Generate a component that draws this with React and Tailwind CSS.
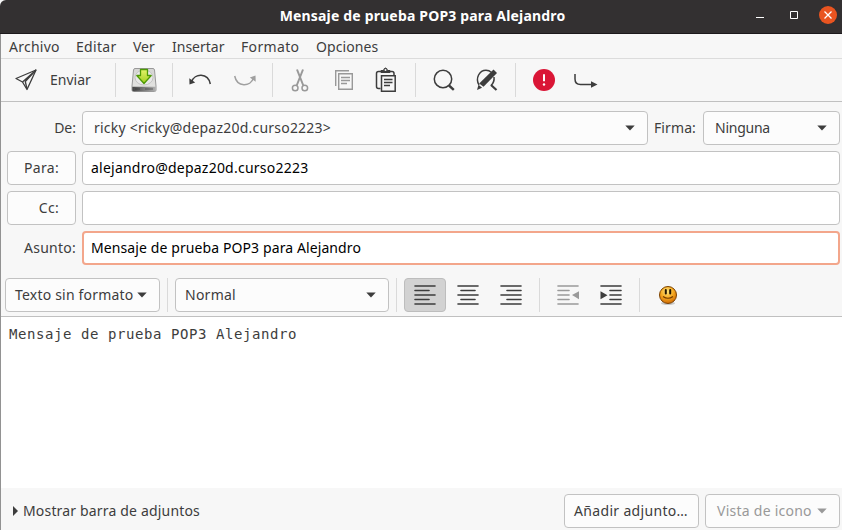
import React from 'react';

const Caret = ({ className = '' }) => (
  <svg className={`shrink-0 ${className}`} width="10" height="6" viewBox="0 0 10 6">
    <path d="M.3.5h9.4L5 5.6z" fill="currentColor" />
  </svg>
);

const Sep = ({ className = '' }) => <div className={`h-[34px] w-px shrink-0 bg-[#dadada] ${className}`} />;

const box = 'flex shrink-0 items-center rounded-[4px] border border-[#c2c2c2] bg-[#fcfcfc]';

const Lines = ({ rows, children, className = '' }) => (
  <svg className={className} width="22" height="20" viewBox="0 0 22 20">
    {rows.map(([a, b], i) => (
      <path key={i} d={`M${a} ${1 + i * 4.5}H${b}`} stroke="currentColor" strokeWidth="1.6" strokeLinecap="round" />
    ))}
    {children}
  </svg>
);

const Send = () => (
  <svg width="24" height="24" viewBox="0 0 24 24" fill="none" stroke="currentColor" strokeWidth="1.3" strokeLinejoin="round">
    <path d="M22 2 2 10.5l6.500 3.500L13 21.500z" />
    <path d="M22 2 8.500 14M22 2 11.300 13.500 13 21" />
  </svg>
);

const Drive = () => (
  <svg width="26" height="26" viewBox="0 0 26 26">
    <defs>
      <linearGradient id="top" x1="0" y1="0" x2="0" y2="1">
        <stop stopColor="#d5d5d3" />
        <stop offset="1" stopColor="#e6e6e4" />
      </linearGradient>
      <linearGradient id="front" x1="0" x2="1">
        <stop stopColor="#444" />
        <stop offset="1" stopColor="#b0b0b0" />
      </linearGradient>
      <linearGradient id="arrow" x1="0" y1="0" x2="0" y2="1">
        <stop stopColor="#e4f36a" />
        <stop offset="1" stopColor="#9fce1f" />
      </linearGradient>
    </defs>
    <path d="M4 1.500h18q1.200 0 1.500 1.500l1.500 16v4q0 1.500-1.500 1.500h-21Q1 24.500 1 23v-4L2.500 3q.3-1.500 1.500-1.500z" fill="url(#top)" stroke="#999" />
    <path d="M1.300 19.800h23.400V23q0 1.200-1.200 1.200h-21Q1.300 24.200 1.300 23z" fill="url(#front)" />
    <ellipse cx="13" cy="10.500" rx="9" ry="7.500" fill="#e9e9e8" stroke="#bbb" strokeWidth=".8" />
    <path d="M4 22h5M14 22h8" stroke="#292929" strokeWidth="1.200" opacity=".55" />
    <path d="M9.500 2.500h7v6h3.700L13 16.500 5.800 8.500h3.700z" fill="url(#arrow)" stroke="#4e9a06" strokeWidth="1.300" strokeLinejoin="round" />
  </svg>
);

const Undo = () => (
  <svg width="24" height="16" viewBox="0 0 24 16" fill="none">
    <path d="M3.500 10C6.500 1 20 .5 22.300 12" stroke="currentColor" strokeWidth="1.500" />
    <path d="m1.300 6.300.2 6.200 5.700-2z" fill="currentColor" />
  </svg>
);

const Cut = () => (
  <svg width="18" height="24" viewBox="0 0 18 24" fill="none" stroke="currentColor" strokeWidth="1.500">
    <circle cx="4.200" cy="20" r="2.800" />
    <circle cx="13.800" cy="20" r="2.800" />
    <path d="M6 1.500 12.300 17.500M12 1.500 5.700 17.500" strokeWidth="2" />
  </svg>
);

const Copy = () => (
  <svg width="20" height="22" viewBox="0 0 20 22" fill="none" stroke="currentColor" strokeWidth="1.400">
    <path d="M1.700 17V1.700H15M4.700 4.700h13.600v15.600H4.700zM7 8.500h9M7 11.500h9M7 14.500h6" />
  </svg>
);

const Paste = () => (
  <svg width="22" height="26" viewBox="0 0 22 26" fill="none" stroke="currentColor" strokeWidth="1.500">
    <path d="M5.500 21.500H3.500Q1.500 21.500 1.500 19.500V6.500Q1.500 4.500 3.500 4.500H17Q19 4.500 19 6.500V8" />
    <path d="M6.500 8.800h13.700v15.400H6.500zM9 12.500h8.500M9 15.500h8.500M9 18.500h6" />
    <path d="M6 5.500V3.500h2.500Q9 1 10.500 1T12.500 3.500H15v2z" fill="currentColor" strokeWidth="1" />
    <circle cx="10.500" cy="3" r="1" fill="#f7f7f7" stroke="none" />
  </svg>
);

const Search = () => (
  <svg width="24" height="24" viewBox="0 0 24 24" fill="none" stroke="currentColor">
    <circle cx="11" cy="11" r="8.700" strokeWidth="1.500" />
    <path d="m17 17.500 4.800 4.300" strokeWidth="2.400" />
  </svg>
);

const Replace = () => (
  <svg width="24" height="24" viewBox="0 0 24 24" fill="none" stroke="currentColor">
    <path d="M4 17C0 10 4.500 2.200 11 2.200c2 0 4 .8 5.200 2M19 9c.4 3-.3 6-3 8.500" strokeWidth="1.500" />
    <path d="m16 17 5.500 5" strokeWidth="2.200" />
    <path d="m18.500 1.500 3.500 3.400L8.500 18.800l-4.300-3.300z" fill="currentColor" stroke="none" />
    <path d="m3.500 16.800 3.600 2.900L2 22z" fill="currentColor" stroke="none" />
  </svg>
);

const Smiley = () => (
  <svg width="20" height="21" viewBox="0 0 20 21">
    <defs>
      <radialGradient id="face" cx=".45" cy=".3" r=".75">
        <stop stopColor="#ffe680" />
        <stop offset=".5" stopColor="#f5a820" />
        <stop offset="1" stopColor="#c96000" />
      </radialGradient>
    </defs>
    <ellipse cx="10" cy="18.300" rx="7" ry="1.800" fill="#c9c9c9" />
    <circle cx="10" cy="10" r="8.500" fill="url(#face)" stroke="#7c4200" />
    <path d="M7.800 5v3.500M12.200 5v3.500" stroke="#211400" strokeWidth="2" strokeLinecap="round" />
    <path d="M5 11.500q5 3.500 10 0" fill="none" stroke="#743b00" strokeWidth="1.200" />
  </svg>
);

export default function App() {
  return (
    <div className="flex h-[530px] w-[842px] flex-col overflow-hidden bg-[#f7f7f7] font-['Noto_Sans','Open_Sans',sans-serif] text-[14px] leading-5 whitespace-nowrap text-[#3d3d3d]">
      <header className="grid h-[34px] shrink-0 grid-cols-[1fr_auto_1fr] items-center rounded-tl-[6px] border-b border-[#1c191c] bg-[#333031] text-white">
        <span />
        <h1 className="pb-0.5 pl-[3px] text-[14px] font-bold tracking-[0.17px]">Mensaje de prueba POP3 para Alejandro</h1>
        <div className="flex items-center justify-end pr-[5px] pb-[3px]">
          <svg width="72" height="18" viewBox="0 0 72 18" fill="none" stroke="white">
            <path d="M9 11.500h8M43.500 5.500h7v7h-7z" />
          </svg>
          <svg width="18" height="18" viewBox="0 0 18 18">
            <circle cx="9" cy="9" r="9" fill="#e95420" />
            <path d="m5.500 5.500 7 7m0-7-7 7" stroke="white" strokeWidth="1.300" />
          </svg>
        </div>
      </header>

      <div className="flex min-h-0 flex-1 flex-col border-l border-[#929292]">
        <nav className="flex h-[25px] shrink-0 items-center border-b border-[#dcdcdc] pt-0.5 pl-2">
          <span className="w-[67px] tracking-[0.25px]">Archivo</span>
          <span className="w-[57px] tracking-[0.3px]">Editar</span>
          <span className="w-[39px]">Ver</span>
          <span className="w-[69px]">Insertar</span>
          <span className="w-[75px] tracking-[0.35px]">Formato</span>
          <span className="tracking-[0.1px]">Opciones</span>
        </nav>

        <div className="flex h-[43px] shrink-0 items-center border-b border-[#c0c0c0]">
          <div className="flex w-[114px] items-center gap-3 pl-[13px]">
            <Send />
            <span>Enviar</span>
          </div>
          <Sep />
          <div className="flex w-14 justify-center"><Drive /></div>
          <Sep />
          <div className="flex w-[99px] items-center gap-[21px] pl-[15px]">
            <Undo />
            <span className="rotate-180 text-[#a0a0a0]"><Undo /></span>
          </div>
          <Sep />
          <div className="flex w-[142px] items-center pl-[18px]">
            <span className="w-[43px] text-[#999]"><Cut /></span>
            <span className="w-[41px] text-[#999]"><Copy /></span>
            <Paste />
          </div>
          <Sep />
          <div className="flex w-[99px] items-center gap-[19px] pl-4">
            <Search />
            <Replace />
          </div>
          <Sep />
          <div className="flex items-center gap-[19px] pl-[17px]">
            <svg width="22" height="22" viewBox="0 0 22 22">
              <circle cx="11" cy="11" r="11" fill="#da1636" />
              <path d="M11 5.200v7" stroke="white" strokeWidth="2" />
              <circle cx="11" cy="15.500" r="1.200" fill="white" />
            </svg>
            <svg className="mt-0.5" width="24" height="16" viewBox="0 0 24 16">
              <path d="M1 1v5q0 5.500 5.500 5.500H18" fill="none" stroke="currentColor" strokeWidth="1.500" />
              <path d="M17 8.300 23.500 11.500 17 14.700z" fill="currentColor" />
            </svg>
          </div>
        </div>

        <section className="grid h-[163px] shrink-0 grid-cols-[69px_758px] content-start items-center gap-x-1.5 gap-y-1.5 pt-[9px] pl-1.5">
          <span className="text-right">De:</span>
          <div className="flex items-center">
            <div className={`${box} h-[34px] w-[566px] justify-between pr-3 pl-[11px]`}>
              <span className="tracking-[0.22px]">ricky &lt;ricky@depaz20d.curso2223&gt;</span>
              <Caret />
            </div>
            <span className="w-[55px] pl-1.5 tracking-[0.1px]">Firma:</span>
            <div className={`${box} h-[34px] w-[137px] justify-between pr-3 pl-[11px]`}>
              <span className="tracking-[-0.25px]">Ninguna</span>
              <Caret />
            </div>
          </div>
          <div className={`${box} h-[34px] justify-end pr-4 tracking-[0.3px]`}>Para:</div>
          <div className="flex h-[34px] items-center rounded-[4px] border border-[#c2c2c2] bg-white pl-2 tracking-[0.23px] text-black">alejandro@depaz20d.curso2223</div>
          <div className={`${box} h-[34px] justify-end pr-4 tracking-[0.3px]`}>Cc:</div>
          <div className="h-[34px] rounded-[4px] border border-[#c2c2c2] bg-white" />
          <span className="text-right tracking-[0.25px]">Asunto:</span>
          <div className="flex h-[34px] items-center rounded-[4px] border-2 border-[#f3a68b] bg-white pl-[7px] tracking-[0.1px] text-black">Mensaje de prueba POP3 para Alejandro</div>
        </section>

        <div className="flex h-[52px] shrink-0 items-center border-b border-[#c0c0c0] pt-[13px] pb-1 pl-1">
          <div className={`${box} h-[34px] w-[155px] justify-between pr-3 pl-[9px]`}>
            <span className="tracking-[0.2px]">Texto sin formato</span>
            <Caret />
          </div>
          <Sep className="mx-[7px]" />
          <div className={`${box} h-[34px] w-[214px] justify-between pr-3 pl-[9px]`}>
            <span className="tracking-[0.25px]">Normal</span>
            <Caret />
          </div>
          <Sep className="mx-[7px]" />
          <div className="flex h-[34px] w-[42px] items-center justify-center rounded-[4px] border border-[#bdbdbd] bg-[#d2d2d2]">
            <Lines rows={[[1, 21], [1, 15], [1, 21], [1, 15], [1, 21]]} />
          </div>
          <Lines className="ml-[11px]" rows={[[1, 21], [4, 18], [1, 21], [4, 18], [1, 21]]} />
          <Lines className="ml-[21px]" rows={[[1, 21], [7, 21], [1, 21], [7, 21], [1, 21]]} />
          <Sep className="ml-[17px]" />
          <Lines className="ml-[17px] text-[#9a9a9a]" rows={[[1, 21], [1, 12], [1, 12], [1, 12], [1, 21]]}>
            <path d="M22 6.200v8L15 10z" fill="currentColor" />
          </Lines>
          <Lines className="ml-[21px]" rows={[[1, 21], [10, 21], [10, 21], [10, 21], [1, 21]]}>
            <path d="M.5 6.200v8l7-4z" fill="currentColor" />
          </Lines>
          <Sep className="ml-[17px]" />
          <span className="ml-[18px]"><Smiley /></span>
        </div>

        <main className="h-[171px] shrink-0 bg-white px-2 pt-[7px] font-['DejaVu_Sans_Mono',monospace] text-[14px] tracking-[0.57px]">
          Mensaje de prueba POP3 Alejandro
        </main>

        <footer className="flex h-[42px] shrink-0 items-center pt-1 pr-0.5 pl-3">
          <svg className="mr-[5px]" width="5" height="10" viewBox="0 0 5 10">
            <path d="M0 0 5 5 0 10z" fill="currentColor" />
          </svg>
          <span className="tracking-[0.17px]">Mostrar barra de adjuntos</span>
          <div className={`${box} ml-auto h-[34px] w-[135px] pl-[9px] tracking-[0.33px]`}>Añadir adjunto…</div>
          <div className={`${box} ml-1.5 h-[34px] w-[135px] justify-between pr-[12px] pl-[11px] text-[#999]`}>
            <span className="tracking-[0.25px]">Vista de icono</span>
            <Caret />
          </div>
        </footer>
      </div>
    </div>
  );
}
